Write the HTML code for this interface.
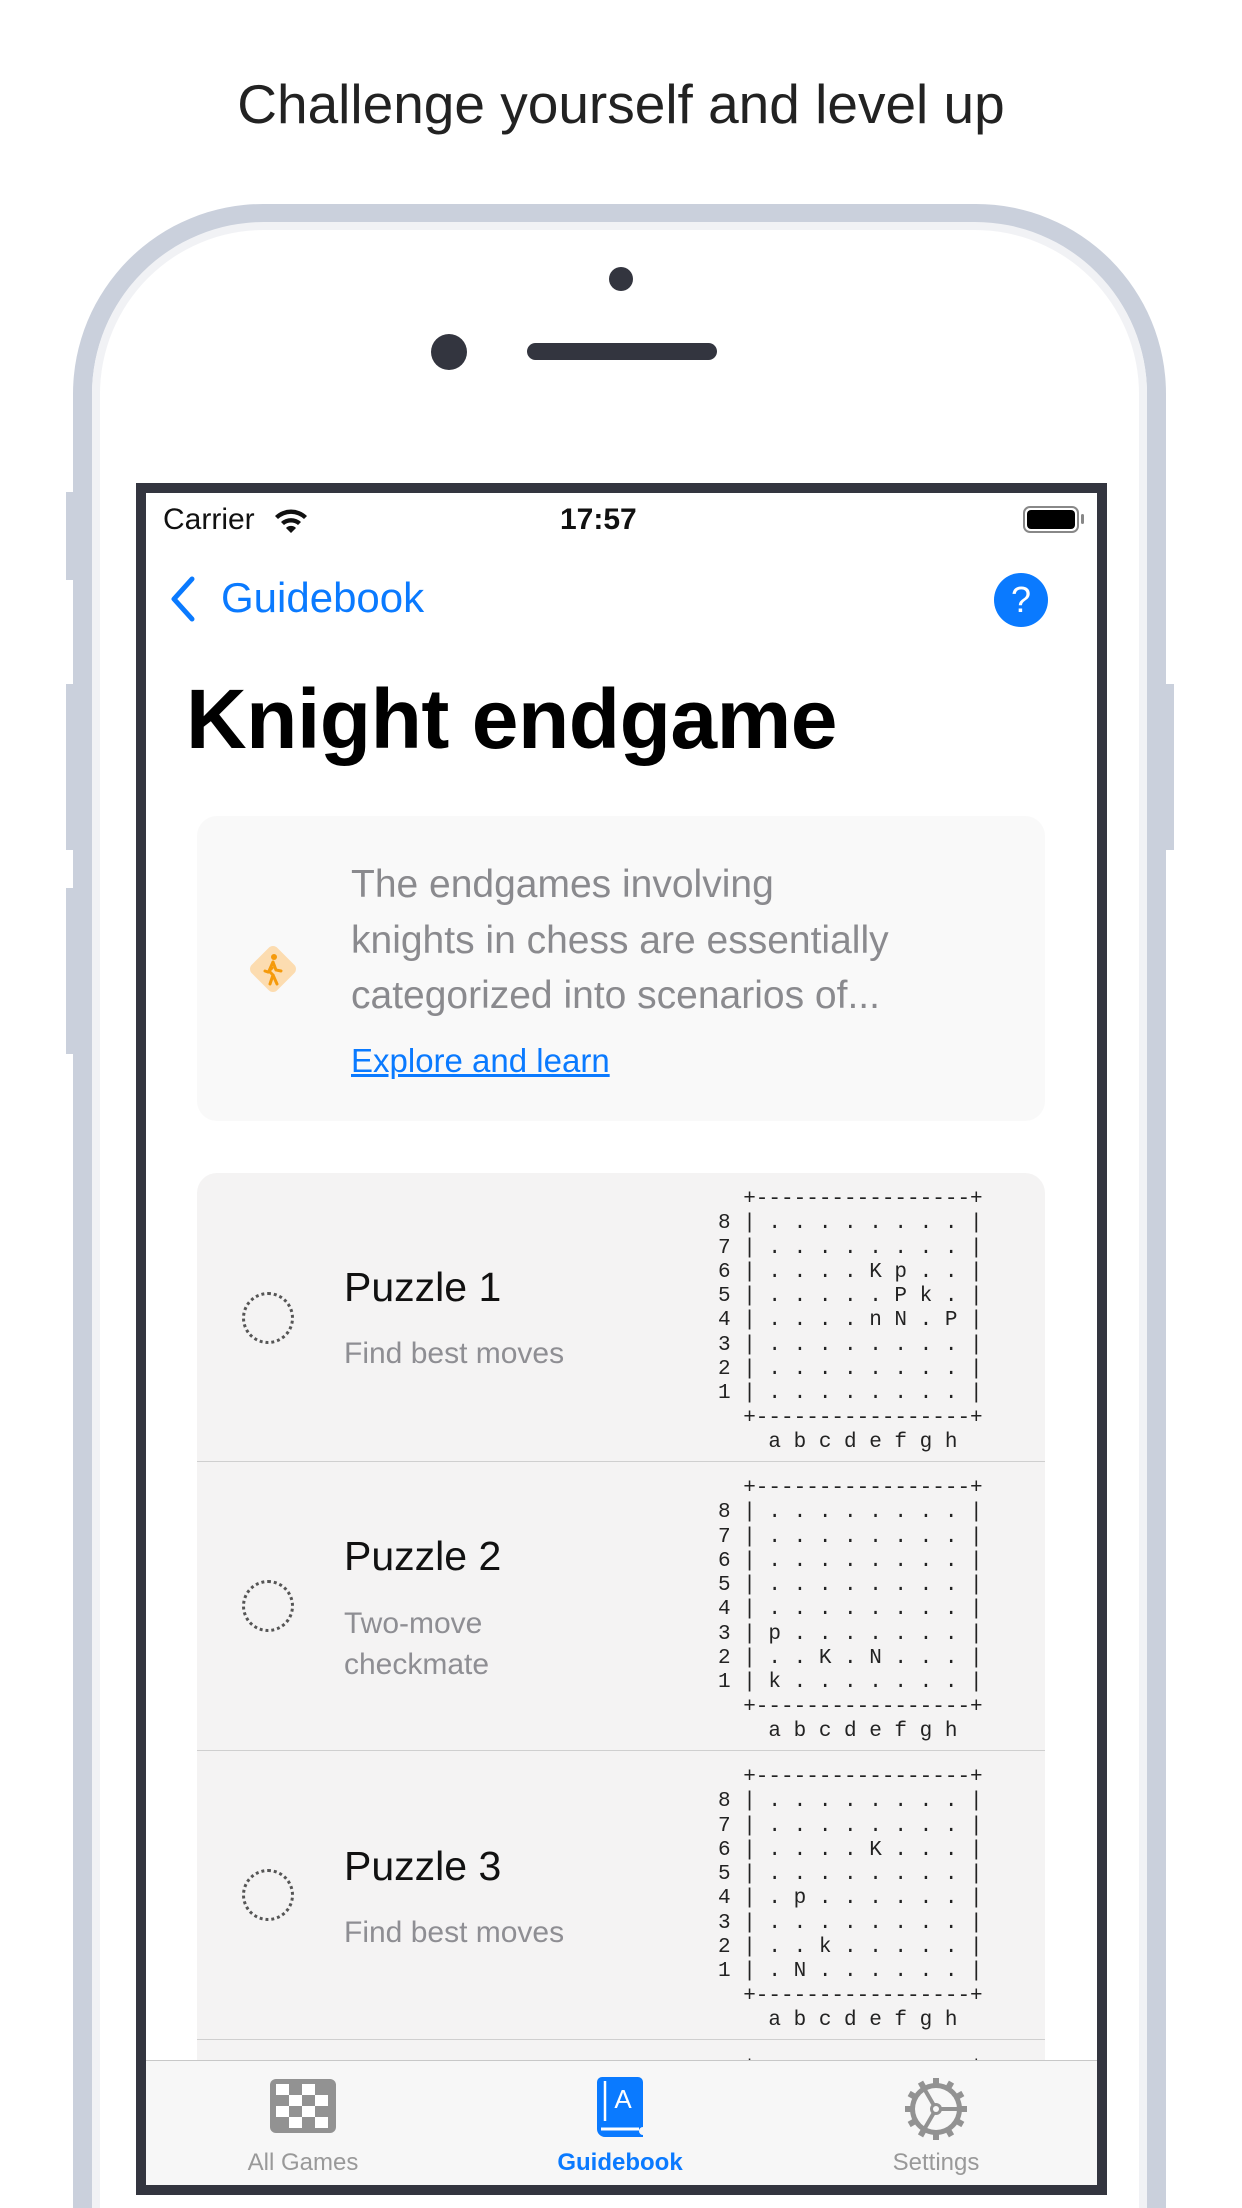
<!DOCTYPE html>
<html><head><meta charset="utf-8"><style>
*{margin:0;padding:0;box-sizing:border-box}
html,body{width:1242px;height:2208px;overflow:hidden}
body{background:#fff;position:relative;font-family:"Liberation Sans",sans-serif}
#wrap{position:absolute;left:0;top:0;width:1242px;height:2208px;overflow:hidden}
.a{position:absolute}
.frame{left:73px;top:204px;width:1093px;height:2004px;border:19px solid #cad0dc;border-bottom:none;border-radius:190px 190px 0 0}
.frame2{left:92px;top:222px;width:1055px;height:1986px;border:8px solid #f1f2f5;border-bottom:none;border-radius:172px 172px 0 0}
.btn{background:#cad0dc;width:8px}
.screen{left:136px;top:483px;width:971px;height:1712px;border:10px solid #33353f;background:#fff;overflow:hidden}
.board{font-family:"Liberation Mono",monospace;font-size:21px;line-height:24.3px;color:#222;white-space:pre;left:580px}
.row{left:51px;width:848px;height:289px;background:#f4f3f3;border-bottom:1.5px solid #cfcfcf}
.circ{width:52px;height:52px;border:3px dotted #555;border-radius:50%}
.pt{font-size:41px;color:#111}
.ps{font-size:30px;color:#8e8e93;line-height:41px}
.tl{font-size:24px;color:#999;text-align:center;width:200px}
</style></head><body><div id="wrap">
<div class="a" style="top:72px;width:1242px;text-align:center;font-size:55px;color:#222">Challenge yourself and level up</div>
<div class="a frame"></div>
<div class="a frame2"></div>
<div class="a btn" style="left:66px;top:492px;height:88px"></div>
<div class="a btn" style="left:66px;top:684px;height:166px"></div>
<div class="a btn" style="left:66px;top:888px;height:166px"></div>
<div class="a btn" style="left:1166px;top:684px;height:166px"></div>
<div class="a" style="left:609px;top:267px;width:24px;height:24px;border-radius:50%;background:#33353f"></div>
<div class="a" style="left:431px;top:334px;width:36px;height:36px;border-radius:50%;background:#33353f"></div>
<div class="a" style="left:527px;top:343px;width:190px;height:17px;border-radius:9px;background:#33353f"></div>

<div class="a screen">
 <div class="a" style="left:17px;top:10px;font-size:30px;color:#111">Carrier</div>
 <svg class="a" style="left:127px;top:14px" width="36" height="28" viewBox="0 0 36 28"><path d="M2 9a23 23 0 0 1 32 0l-3 3a19 19 0 0 0-26 0z M8 15a15 15 0 0 1 20 0l-3 3a11 11 0 0 0-14 0z M13 21a7 7 0 0 1 10 0l-5 5z" fill="#111"/></svg>
 <div class="a" style="left:414px;top:10px;font-size:30px;font-weight:bold;color:#111">17:57</div>
 <div class="a" style="left:877px;top:13px;width:56px;height:27px;border:2px solid #888;border-radius:7px;padding:2px"><div style="width:100%;height:100%;background:#000;border-radius:4px"></div></div>
 <div class="a" style="left:935px;top:21px;width:3px;height:10px;background:#888;border-radius:2px"></div>

 <svg class="a" style="left:22px;top:82px" width="30" height="48" viewBox="0 0 30 48"><path d="M24 4L6 24l18 20" stroke="#0a7aff" stroke-width="5" fill="none" stroke-linecap="round" stroke-linejoin="round"/></svg>
 <div class="a" style="left:75px;top:81px;font-size:42px;color:#0a7aff">Guidebook</div>
 <div class="a" style="left:848px;top:80px;width:54px;height:54px;border-radius:50%;background:#0a7aff;color:#fff;font-size:36px;text-align:center;line-height:54px">?</div>

 <div class="a" style="left:40px;top:178px;font-size:84px;font-weight:bold;color:#000;letter-spacing:-0.5px">Knight endgame</div>

 <div class="a" style="left:51px;top:323px;width:848px;height:305px;background:#f9f9f9;border-radius:20px"></div>
 <svg class="a" style="left:96px;top:445px" width="62" height="62" viewBox="0 0 62 62"><rect x="13" y="13" width="36" height="36" rx="6" transform="rotate(45 31 31)" fill="#fcdcb0"/><circle cx="32" cy="19" r="3" fill="#f59a0b"/><path d="M31 24l-4 9 4 4-3 9M31 24l3 8 5 1M30 30l-4 4-3-1M31 37l4 9" stroke="#f59a0b" stroke-width="3" fill="none" stroke-linecap="round"/></svg>
 <div class="a" style="left:205px;top:364px;font-size:39px;line-height:55.5px;color:#8a8a8e;width:680px">The endgames involving<br>knights in chess are essentially<br>categorized into scenarios of...</div>
 <div class="a" style="left:205px;top:549px;font-size:33px;color:#0a7aff;text-decoration:underline">Explore and learn</div>

 <div class="a row" style="top:680px;border-radius:20px 20px 0 0"></div>
 <div class="a row" style="top:969px"></div>
 <div class="a row" style="top:1258px"></div>
 <div class="a row" style="top:1547px"></div>

 <div class="a circ" style="left:96px;top:799px"></div>
 <div class="a pt" style="left:198px;top:771px">Puzzle 1</div>
 <div class="a ps" style="left:198px;top:840px">Find best moves</div>
 <div class="a board" style="left:572px;top:695px">  +-----------------+
8 | . . . . . . . . |
7 | . . . . . . . . |
6 | . . . . K p . . |
5 | . . . . . P k . |
4 | . . . . n N . P |
3 | . . . . . . . . |
2 | . . . . . . . . |
1 | . . . . . . . . |
  +-----------------+
    a b c d e f g h</div>

 <div class="a circ" style="left:96px;top:1087px"></div>
 <div class="a pt" style="left:198px;top:1040px">Puzzle 2</div>
 <div class="a ps" style="left:198px;top:1110px">Two-move<br>checkmate</div>
 <div class="a board" style="left:572px;top:984px">  +-----------------+
8 | . . . . . . . . |
7 | . . . . . . . . |
6 | . . . . . . . . |
5 | . . . . . . . . |
4 | . . . . . . . . |
3 | p . . . . . . . |
2 | . . K . N . . . |
1 | k . . . . . . . |
  +-----------------+
    a b c d e f g h</div>

 <div class="a circ" style="left:96px;top:1376px"></div>
 <div class="a pt" style="left:198px;top:1350px">Puzzle 3</div>
 <div class="a ps" style="left:198px;top:1419px">Find best moves</div>
 <div class="a board" style="left:572px;top:1273px">  +-----------------+
8 | . . . . . . . . |
7 | . . . . . . . . |
6 | . . . . K . . . |
5 | . . . . . . . . |
4 | . p . . . . . . |
3 | . . . . . . . . |
2 | . . k . . . . . |
1 | . N . . . . . . |
  +-----------------+
    a b c d e f g h</div>
 <div class="a board" style="left:572px;top:1562px">  +-----------------+</div>

 <div class="a" style="left:0;top:1567px;width:951px;height:125px;background:#f7f7f7;border-top:1.5px solid #c8c8c8"></div>
 <svg class="a" style="left:124px;top:1586px" width="66" height="54" viewBox="0 0 66 54"><rect width="66" height="54" rx="6" fill="#929292"/><g fill="#fff"><rect x="6" y="5" width="13" height="11"/><rect x="32" y="5" width="13" height="11"/><rect x="19" y="16" width="13" height="11"/><rect x="45" y="16" width="13" height="11"/><rect x="6" y="27" width="13" height="11"/><rect x="32" y="27" width="13" height="11"/><rect x="19" y="38" width="13" height="11"/><rect x="45" y="38" width="13" height="11"/></g></svg>
 <div class="a tl" style="left:57px;top:1656px">All Games</div>
 <svg class="a" style="left:450px;top:1582px" width="48" height="64" viewBox="0 0 48 64"><path d="M6 2h36a5 5 0 0 1 5 5v45a4 4 0 0 0 0 8v2H9a8 8 0 0 1-8-8V7a5 5 0 0 1 5-5z" fill="#0a7aff"/><path d="M5 54h38" stroke="#fff" stroke-width="3"/><path d="M9 6v40" stroke="#fff" stroke-width="2.5"/><text x="27" y="33" font-family="Liberation Sans" font-size="26" fill="#fff" text-anchor="middle">A</text></svg>
 <div class="a tl" style="left:374px;top:1656px;color:#0a7aff;font-weight:bold">Guidebook</div>
 <svg class="a" style="left:755px;top:1581px" width="70" height="70" viewBox="0 0 70 70"><g fill="#929292"><circle cx="35" cy="35" r="26"/><g id="t"><rect x="32" y="4" width="6" height="7"/></g><use href="#t" transform="rotate(30 35 35)"/><use href="#t" transform="rotate(60 35 35)"/><use href="#t" transform="rotate(90 35 35)"/><use href="#t" transform="rotate(120 35 35)"/><use href="#t" transform="rotate(150 35 35)"/><use href="#t" transform="rotate(180 35 35)"/><use href="#t" transform="rotate(210 35 35)"/><use href="#t" transform="rotate(240 35 35)"/><use href="#t" transform="rotate(270 35 35)"/><use href="#t" transform="rotate(300 35 35)"/><use href="#t" transform="rotate(330 35 35)"/></g><circle cx="35" cy="35" r="21" fill="#f7f7f7"/><g stroke="#929292" stroke-width="4"><path d="M35 35h21M35 35L24 54M35 35L24 16"/></g><circle cx="35" cy="35" r="6" fill="#929292"/><circle cx="35" cy="35" r="3" fill="#f7f7f7"/></svg>
 <div class="a tl" style="left:690px;top:1656px">Settings</div>
</div>
</div></body></html>
